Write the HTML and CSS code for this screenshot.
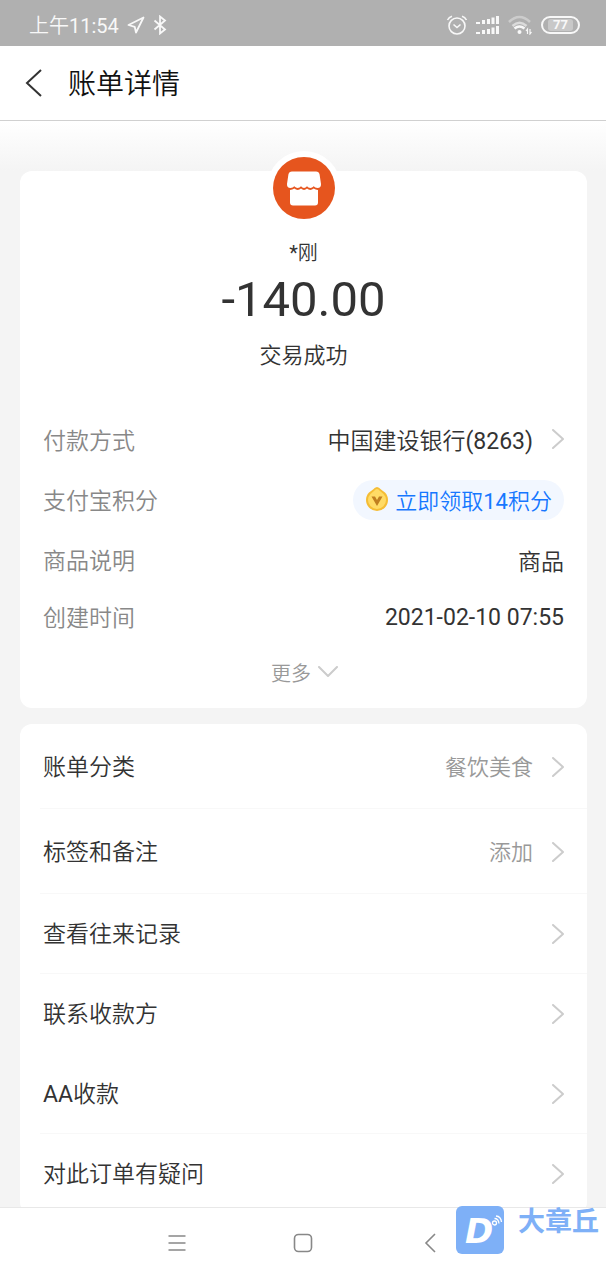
FILE: index.html
```html
<!DOCTYPE html>
<html lang="zh-CN">
<head>
<meta charset="UTF-8" />
<meta name="viewport" content="width=device-width, initial-scale=1" />
<title>账单详情</title>
<link rel="stylesheet" href="styles.css">
</head>
<body>
<div class="app">
  <div class="status-bar">
    <div class="status-left">
      <span class="time">上午<span class="num">11:54</span></span>
      <svg width="18" height="18" viewBox="0 0 18 18" fill="none" stroke="currentColor" stroke-width="1.8" stroke-linejoin="round"><path d="M16.5 1.5 1.5 9l6.2 1.8L9 16.5z"/></svg>
      <svg width="14" height="20" viewBox="0 0 14 20" fill="none" stroke="currentColor" stroke-width="1.8"><path d="M1.5 5.5 12 14.5l-5 4V1.5l5 4-10.5 9"/></svg>
    </div>
    <div class="status-right">
      <svg width="22" height="20" viewBox="0 0 22 20" fill="none" stroke="currentColor" stroke-width="1.6"><circle cx="11" cy="11" r="8"/><path d="M1.5 5Q3 2 6 1.2M20.5 5Q19 2 16 1.2M7.5 9.5 11 12.5l3.5-3"/></svg>
      <svg width="24" height="20" viewBox="0 0 24 20" fill="currentColor"><path d="M0 7h4v2H0zM6 5h3v4H6zM11 4h3v5h-3zM15.5 2.5h3V9h-3zM20 1h3v8h-3zM0 17h4v2H0zM6 15h3v4H6zM11 14h3v5h-3zM15.5 12.5h3V19h-3zM20 11h3v8h-3z"/></svg>
      <svg width="25" height="20" viewBox="0 0 25 20" fill="none" stroke="currentColor" stroke-width="2.6"><path opacity=".4" d="M1 7q10.500-10 21 0"/><path opacity=".6" d="M4.500 11q7-6.500 14 0"/><path d="M6.500 13.500q5-4 10 0"/><circle cx="11.500" cy="17" r="2" fill="currentColor" stroke="none"/><path stroke-width="1.2" d="M19.500 19v-5l-1.500 2M22 14v5l1.500-2"/></svg>
      <span class="battery"><span class="battery-level">77</span></span>
    </div>
  </div>

  <header class="title-bar">
    <button class="back" aria-label="返回">
      <svg width="18" height="28" viewBox="0 0 18 28" fill="none" stroke="currentColor" stroke-width="2"><path d="M16 1 2 14l14 13"/></svg>
    </button>
    <h1>账单详情</h1>
  </header>

  <main class="content">
    <section class="card bill">
      <div class="avatar">
        <svg width="62" height="62" viewBox="0 0 62 62">
          <circle cx="31" cy="31" r="31" fill="#e6551e"/>
          <path fill="#fff" d="M19 14.500h24q3 0 3.600 3l1.400 9.500q.2 4-3.500 4-2.500 0-3.800-1.700-1.500 1.700-3.400 1.700-2 0-3.300-1.700-1.300 1.700-3 1.700t-3-1.700q-1.300 1.700-3.300 1.700-1.900 0-3.400-1.700Q20 31 17.500 31q-3.700 0-3.500-4l1.400-9.500q.6-3 3.600-3z"/>
          <path fill="#fff" d="M17 33q2.500 0 4.300-1.400Q23 33 24.700 33t3.300-1.400Q29.500 33 31 33t3-1.400Q35.600 33 37.300 33t3.400-1.400Q42.500 33 45 33v12.500q0 3-3 3H20q-3 0-3-3z"/>
        </svg>
      </div>
      <p class="payee"><span class="num">*</span>刚</p>
      <p class="amount">-140.00</p>
      <p class="state">交易成功</p>

      <dl class="details">
        <div class="detail">
          <dt>付款方式</dt>
          <dd><a href="#"><span>中国建设银行<span class="num">(8263)</span></span><svg class="arrow" width="12" height="20" viewBox="0 0 12 20"><path d="m1 1 10 9-10 9"/></svg></a></dd>
        </div>
        <div class="detail">
          <dt>支付宝积分</dt>
          <dd>
            <button class="points">
              <svg width="24" height="26" viewBox="0 0 24 26">
                <path fill="#f5bd35" d="M12 1q2 0 4 2.500l4 3q3 3 3 7.500a11 11 0 0 1-22 0q0-4.500 3-7.500l4-3Q10 1 12 1z"/>
                <path fill="#ffdb66" d="M12 3q1.500 0 3 2l3.500 3q2.500 2.500 2.500 6a9 9 0 0 1-18 0q0-3.500 2.500-6L9 5q1.500-2 3-2z"/>
                <path fill="#c07f20" d="M6.500 10.500H10l2 3.500 2-3.500h3.500L12 20z"/>
              </svg>
              <span>立即领取<span class="num">14</span>积分</span>
            </button>
          </dd>
        </div>
        <div class="detail">
          <dt>商品说明</dt>
          <dd>商品</dd>
        </div>
        <div class="detail short">
          <dt>创建时间</dt>
          <dd class="num">2021-02-10 07:55</dd>
        </div>
      </dl>
      <button class="more">更多
        <svg class="arrow" width="20" height="12" viewBox="0 0 20 12"><path d="m1 1 9 9 9-9"/></svg>
      </button>
    </section>

    <nav class="card menu">
      <a class="item tall line" href="#"><span>账单分类</span><span class="value">餐饮美食</span><svg class="arrow" width="12" height="20" viewBox="0 0 12 20"><path d="m1 1 10 9-10 9"/></svg></a>
      <a class="item tall line" href="#"><span>标签和备注</span><span class="value">添加</span><svg class="arrow" width="12" height="20" viewBox="0 0 12 20"><path d="m1 1 10 9-10 9"/></svg></a>
      <a class="item line" href="#"><span>查看往来记录</span><svg class="arrow" width="12" height="20" viewBox="0 0 12 20"><path d="m1 1 10 9-10 9"/></svg></a>
      <a class="item" href="#"><span>联系收款方</span><svg class="arrow" width="12" height="20" viewBox="0 0 12 20"><path d="m1 1 10 9-10 9"/></svg></a>
      <a class="item line" href="#"><span><b class="num">AA</b>收款</span><svg class="arrow" width="12" height="20" viewBox="0 0 12 20"><path d="m1 1 10 9-10 9"/></svg></a>
      <a class="item" href="#"><span>对此订单有疑问</span><svg class="arrow" width="12" height="20" viewBox="0 0 12 20"><path d="m1 1 10 9-10 9"/></svg></a>
    </nav>
  </main>

  <footer class="system-nav">
    <button aria-label="菜单"><svg width="20" height="20" viewBox="0 0 20 20"><path d="M1.500 3h17M1.500 10h17M1.500 17h17"/></svg></button>
    <button aria-label="主页"><svg width="20" height="20" viewBox="0 0 20 20"><rect x="1.500" y="1.500" width="17" height="17" rx="4"/></svg></button>
    <button aria-label="后退"><svg width="20" height="20" viewBox="0 0 20 20"><path d="m16 1-9 9 9 9"/></svg></button>
    <!-- site watermark over the corner -->
    <div class="watermark">
      <span class="logo">D
        <svg class="waves" width="12" height="12" viewBox="0 0 12 12" fill="none" stroke="#fff" stroke-width="1.3"><circle cx="3.500" cy="8" r="2"/><path d="M3.500 3.500q4 0 4.500 5M5 1q5 .5 5.500 6"/></svg>
      </span>
      <span class="mark-name">大章丘</span>
    </div>
  </footer>
</div>
</body>
</html>
```
FILE: styles.css
```css
* {
  margin: 0;
  padding: 0;
  box-sizing: border-box;
}

body {
  font-family: Roboto, "Noto Sans CJK SC", sans-serif;
  font-size: 23px;
  font-weight: 350;
  color: #333;
  background: #f4f4f4;
}

button {
  font: inherit;
  color: inherit;
  background: none;
  border: none;
  cursor: pointer;
}

a {
  color: inherit;
  text-decoration: none;
}

svg {
  flex: none;
}

.num {
  font-weight: 400;
}

.app {
  display: flex;
  flex-direction: column;
  height: 100vh;
}

/* status bar */
.status-bar {
  display: flex;
  justify-content: space-between;
  align-items: center;
  height: 46px;
  padding: 4px 26px 0 29px;
  background: #b0b0b0;
  color: #f8f8f8;
  flex: none;
}

.status-left,
.status-right {
  display: flex;
  align-items: center;
  gap: 8px;
}

.time {
  padding-bottom: 2px;
  font-size: 20px;
}

.battery {
  display: flex;
  align-items: center;
  justify-content: center;
  width: 39px;
  height: 18px;
  border: 2px solid #f8f8f8;
  border-radius: 9px;
}

.battery-level {
  padding: 0 5px;
  border-radius: 3px;
  background: #c8c8c8;
  font-size: 13px;
  font-weight: 700;
  line-height: 12px;
}

/* header */
.title-bar {
  display: flex;
  align-items: center;
  gap: 25px;
  height: 75px;
  padding: 0 25px;
  background: #fff;
  border-bottom: 1px solid #d0d0d0;
  flex: none;
}

.title-bar h1 {
  padding-bottom: 2px;
  font-size: 28px;
  font-weight: 350;
  color: #111;
}

.back {
  display: flex;
}

.content {
  flex: 1;
  min-height: 0;
  overflow-y: auto;
  scrollbar-width: none;
  padding: 50px 19px 0 20px;
  background: linear-gradient(#fff, #f4f4f4 50px);
}

.card {
  background: #fff;
  border-radius: 12px;
}

/* bill */
.bill {
  display: flex;
  flex-direction: column;
  align-items: center;
  padding-bottom: 8px;
}

.avatar {
  display: flex;
  margin: -20px 0 8px;
  padding: 6px;
  border-radius: 50%;
  background: #fff;
}

.payee {
  font-size: 20px;
  line-height: 40px;
}

.amount {
  font-size: 49px;
  font-weight: 400;
  line-height: 54px;
}

.state {
  font-size: 22px;
  line-height: 58px;
}

.details {
  width: 100%;
  margin-top: 25px;
  padding: 0 23px;
}

.detail {
  display: flex;
  justify-content: space-between;
  align-items: center;
  height: 60px;
}

.detail.short {
  height: 54px;
}

.detail dt {
  padding-bottom: 2px;
  color: #888;
}

.detail a {
  display: flex;
  align-items: center;
  gap: 19px;
  padding-bottom: 2px;
}

.arrow {
  fill: none;
  stroke: #ccc;
  stroke-width: 2;
  stroke-linecap: round;
  stroke-linejoin: round;
}

.points {
  display: flex;
  align-items: center;
  gap: 6px;
  height: 40px;
  padding: 0 12px 2px;
  border-radius: 20px;
  background: #f2f7ff;
  color: #1677ff;
  font-size: 22px;
}

.more {
  display: flex;
  align-items: center;
  gap: 7px;
  height: 56px;
  padding: 0 4px 0 6px;
  color: #999;
  font-size: 20px;
}

/* menu */
.menu {
  margin-top: 16px;
}

.item {
  position: relative;
  display: flex;
  align-items: center;
  gap: 19px;
  height: 80px;
  padding: 0 23px;
}

.item.tall {
  height: 85px;
}

.item.line::after {
  content: "";
  position: absolute;
  left: 20px;
  right: 0;
  bottom: 0;
  height: 1px;
  background: #f8f8f8;
}

.item span {
  padding-bottom: 4px;
}

.item .arrow {
  margin-left: auto;
}

.item .value {
  margin-left: auto;
  color: #999;
  font-size: 22px;
}

.item .value + .arrow {
  margin-left: 0;
}

/* bottom bar */
.system-nav {
  position: relative;
  display: flex;
  justify-content: center;
  height: 73px;
  padding-bottom: 2px;
  background: #fff;
  border-top: 1px solid #e8e8e8;
  flex: none;
}

.system-nav button {
  display: flex;
  align-items: center;
  justify-content: center;
  width: 126px;
}

.system-nav button svg {
  fill: none;
  stroke: #888;
  stroke-width: 1.6;
}

.watermark {
  position: absolute;
  top: -2px;
  right: 7px;
  display: flex;
  align-items: flex-start;
  gap: 14px;
  color: #7eb0f7;
}

.logo {
  position: relative;
  width: 48px;
  height: 48px;
  padding-left: 9px;
  border-radius: 6px;
  background: #7eb0f7;
  color: #fff;
  font-family: "DejaVu Sans", sans-serif;
  font-size: 34px;
  font-style: italic;
  font-weight: 700;
  line-height: 50px;
}

.waves {
  position: absolute;
  top: 9px;
  right: 1px;
}

.mark-name {
  font-size: 27px;
  font-weight: 700;
  line-height: 32px;
}
```
